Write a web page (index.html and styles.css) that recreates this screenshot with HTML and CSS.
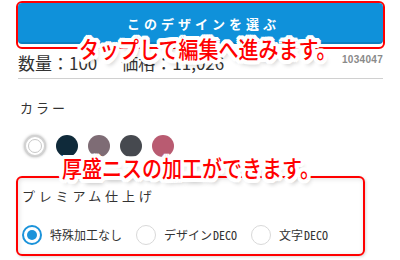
FILE: index.html
```html
<!DOCTYPE html>
<html lang="ja">
<head>
<meta charset="utf-8">
<link rel="stylesheet" href="styles.css">
</head>
<body>
<div class="page">
  <div class="btn-frame">
    <button class="select-btn">このデザインを選ぶ</button>
  </div>
  <div class="meta">
    <span class="qty">数量：100<span class="price">価格：11,026</span></span>
    <span class="code">1034047</span>
  </div>
  <div class="color-section">
    <div class="section-label">カラー</div>
    <div class="swatches">
      <span class="swatch swatch-white selected"></span>
      <span class="swatch swatch-navy"></span>
      <span class="swatch swatch-mauve"></span>
      <span class="swatch swatch-charcoal"></span>
      <span class="swatch swatch-rose"></span>
    </div>
  </div>
  <div class="premium">
    <div class="section-label premium-label">プレミアム仕上げ</div>
    <div class="radios">
      <label class="radio-item"><span class="radio checked"></span><span class="radio-text">特殊加工なし</span></label>
      <label class="radio-item"><span class="radio"></span><span class="radio-text">デザイン<span class="latin">DECO</span></span></label>
      <label class="radio-item"><span class="radio"></span><span class="radio-text">文字<span class="latin">DECO</span></span></label>
    </div>
  </div>
  <p class="note note-top">タップして編集へ進みます。</p>
  <p class="note note-bottom">厚盛ニスの加工ができます。</p>
</div>
</body>
</html>
```
FILE: styles.css
```css
html, body {
  margin: 0;
  padding: 0;
  background: #fff;
}
body {
  font-family: "Noto Sans CJK JP", "Noto Sans", sans-serif;
  color: #333;
}
.page {
  position: relative;
  width: 400px;
  height: 260px;
  overflow: hidden;
  box-sizing: border-box;
  padding: 1px 15px 0 16px;
}
.btn-frame {
  border: 2px solid #f00;
  border-radius: 6px;
  padding: 0 0 3px 0;
}
.select-btn {
  display: flex;
  align-items: center;
  justify-content: center;
  width: 100%;
  height: 41px;
  margin: 0;
  border: 0;
  border-radius: 4px;
  background: #0f91da;
  box-shadow: inset 0 -2px 0 rgba(0, 0, 0, 0.12);
  color: #fff;
  font-family: "Noto Sans CJK JP", sans-serif;
  font-weight: bold;
  font-size: 13px;
  letter-spacing: 4px;
  padding: 0 0 0 6px;
}
.meta {
  display: flex;
  justify-content: space-between;
  align-items: flex-start;
  margin: 3px 2px 0 2px;
  height: 26px;
  border-bottom: 1px solid #d0d0d0;
}
.qty {
  font-size: 17px;
  line-height: 22px;
  color: #333;
}
.price {
  margin-left: 24px;
}
.code {
  font-family: "Liberation Sans", sans-serif;
  font-weight: bold;
  font-size: 10px;
  line-height: 10px;
  color: #8a8a8a;
  letter-spacing: 0.3px;
  margin-top: 3px;
}
.color-section {
  padding: 21px 0 0 4px;
}
.section-label {
  font-size: 13px;
  line-height: 16px;
  letter-spacing: 3px;
  color: #333;
}
.swatches {
  display: flex;
  gap: 10px;
  margin-top: 19px;
  padding-left: 4px;
}
.swatch {
  display: block;
  width: 22px;
  height: 22px;
  border-radius: 50%;
  box-sizing: border-box;
}
.swatch-white {
  position: relative;
  background: #fff;
  border: 2px solid #d2d2d2;
  box-shadow: 0 0 3px rgba(0, 0, 0, 0.3);
}
.swatch-white::after {
  content: "";
  position: absolute;
  inset: 2px;
  border-radius: 50%;
  border: 1px solid #c8c8c8;
}
.swatch-navy { background: #0f2a3a; }
.swatch-mauve { background: #7e6c75; }
.swatch-charcoal { background: #46494f; }
.swatch-rose { background: #b95b71; }
.premium {
  box-sizing: border-box;
  width: 349px;
  height: 80px;
  margin-top: 19px;
  border: 2px solid #f00;
  border-radius: 6px;
  padding: 10px 0 0 4px;
  box-shadow: inset 1px 1px 5px rgba(0, 0, 0, 0.12), 1px 1px 3px rgba(0, 0, 0, 0.15);
}
.premium-label {
  letter-spacing: 3.8px;
}
.radios {
  display: flex;
  align-items: center;
  gap: 14px;
  margin-top: 21px;
}
.radio-item {
  display: flex;
  align-items: center;
  gap: 8px;
}
.radio {
  position: relative;
  display: block;
  width: 20px;
  height: 20px;
  box-sizing: border-box;
  border-radius: 50%;
  border: 1.5px solid #d9d9d9;
  background: #fff;
}
.radio.checked {
  border: 2px solid #1b93da;
}
.radio.checked::after {
  content: "";
  position: absolute;
  left: 3px;
  top: 3px;
  width: 10px;
  height: 10px;
  border-radius: 50%;
  background: #1b93da;
}
.radio-text {
  font-size: 12px;
  line-height: 16px;
  color: #333;
}
.latin {
  font-feature-settings: "hwid";
  margin-left: 1px;
}
.note {
  position: absolute;
  margin: 0;
  font-size: 23px;
  line-height: 23px;
  font-weight: 500;
  color: #f00;
  white-space: nowrap;
  transform: scale(0.87, 1);
  transform-origin: left top;
  text-shadow:
    4px 0 0 #fff, -4px 0 0 #fff, 0 4px 0 #fff, 0 -4px 0 #fff,
    3px 3px 0 #fff, -3px 3px 0 #fff, 3px -3px 0 #fff, -3px -3px 0 #fff,
    4px 2px 0 #fff, -4px 2px 0 #fff, 4px -2px 0 #fff, -4px -2px 0 #fff,
    2px 4px 0 #fff, -2px 4px 0 #fff, 2px -4px 0 #fff, -2px -4px 0 #fff,
    3px 5px 5px rgba(0, 0, 0, 0.3);
}
.note-top {
  left: 79px;
  top: 37px;
}
.note-bottom {
  left: 62px;
  top: 156px;
}
```
